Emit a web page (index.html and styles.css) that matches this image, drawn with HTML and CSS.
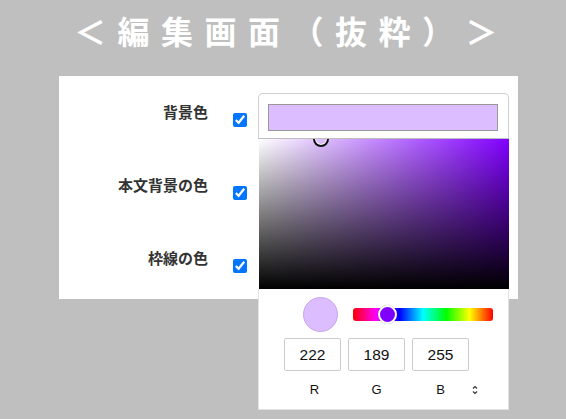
FILE: index.html
```html
<!DOCTYPE html>
<html lang="ja">
<head>
<meta charset="utf-8">
<title>編集画面（抜粋）</title>
<link rel="stylesheet" href="styles.css">
</head>
<body>
<div class="stage">
  <h1 class="title">＜編集画面（抜粋）＞</h1>
  <div class="panel">
    <div class="row">
      <span class="label">背景色</span>
      <input class="check" type="checkbox" checked>
    </div>
    <div class="row">
      <span class="label">本文背景の色</span>
      <input class="check" type="checkbox" checked>
    </div>
    <div class="row">
      <span class="label">枠線の色</span>
      <input class="check" type="checkbox" checked>
    </div>
  </div>

  <div class="picker">
    <div class="picker-head">
      <div class="swatch-bar"></div>
    </div>
    <div class="sv-area">
      <div class="sv-white"></div>
      <div class="sv-black"></div>
      <div class="sv-cursor"></div>
    </div>
    <div class="picker-body">
      <div class="tools">
        <div class="preview"></div>
        <div class="hue">
          <div class="hue-thumb"></div>
        </div>
      </div>
      <div class="fields">
        <div class="field">222</div>
        <div class="field">189</div>
        <div class="field">255</div>
      </div>
      <div class="field-labels">
        <span class="flabel">R</span>
        <span class="flabel">G</span>
        <span class="flabel">B</span>
        <svg class="toggle" width="6" height="10" viewBox="0 0 6 10">
          <path d="M1 3.5 L3 1.5 L5 3.5 M1 6.5 L3 8.5 L5 6.5" fill="none" stroke="#333" stroke-width="1.2"/>
        </svg>
      </div>
    </div>
  </div>
</div>
</body>
</html>
```

FILE: styles.css
```css
html, body {
  margin: 0;
  padding: 0;
}
body {
  background: #bfbfbf;
  font-family: "Noto Sans CJK JP", "Noto Sans", sans-serif;
}
.stage {
  position: relative;
  width: 566px;
  height: 419px;
  overflow: hidden;
  background: #bfbfbf;
  border-top-left-radius: 4px;
}
.title {
  margin: 0;
  height: 76px;
  box-sizing: border-box;
  padding: 9px 0 0 74px;
  font-size: 32px;
  line-height: 42px;
  font-weight: 700;
  letter-spacing: 11.5px;
  color: #ffffff;
  white-space: nowrap;
}
.panel {
  margin-left: 59px;
  width: 459px;
  height: 223px;
  background: #ffffff;
  box-sizing: border-box;
  padding-top: 26px;
}
.row {
  display: flex;
  align-items: flex-start;
  height: 73px;
}
.label {
  width: 149px;
  text-align: right;
  font-size: 15px;
  line-height: 20px;
  font-weight: 700;
  color: #333333;
}
.check {
  width: 14px;
  height: 14px;
  margin: 11px 0 0 25px;
}

/* color picker popover */
.picker {
  position: absolute;
  left: 258px;
  top: 93px;
  width: 251px;
  height: 317px;
  display: flex;
  flex-direction: column;
}
.picker-head {
  height: 46px;
  box-sizing: border-box;
  border: 1px solid #cfcfcf;
  border-bottom-color: #bdbdbd;
  border-radius: 5px 5px 0 0;
  background: #ffffff;
  padding: 10px 10px 0 9px;
  position: relative;
  z-index: 2;
}
.swatch-bar {
  height: 27px;
  box-sizing: border-box;
  border: 1px solid #999999;
  background: #dcbdff;
}
.sv-area {
  position: relative;
  height: 150px;
  margin-left: 1px;
  background: #8000ff;
}
.sv-white {
  position: absolute;
  inset: 0;
  background: linear-gradient(to right, #ffffff, rgba(255,255,255,0));
}
.sv-black {
  position: absolute;
  inset: 0;
  background: linear-gradient(to bottom, rgba(0,0,0,0), #000000);
}
.sv-cursor {
  position: absolute;
  left: 54px;
  top: -8px;
  width: 12px;
  height: 12px;
  border: 2px solid #111111;
  border-radius: 50%;
  box-shadow: inset 0 0 0 1px #ffffff;
  z-index: 1;
}
.picker-body {
  flex: 1;
  background: #ffffff;
  border: 1px solid #e2e2e2;
  border-top: none;
  box-sizing: border-box;
}
.tools {
  display: flex;
  align-items: center;
  gap: 15px;
  padding: 8px 0 0 44px;
}
.preview {
  width: 35px;
  height: 35px;
  box-sizing: border-box;
  border-radius: 50%;
  background: #dcbdff;
  border: 1px solid #c7a6ee;
}
.hue {
  position: relative;
  width: 140px;
  height: 13px;
  border-radius: 3px;
  background: linear-gradient(to right, #ff0000 0%, #ff00ff 16.6%, #0000ff 33.3%, #00ffff 50%, #00ff00 66.6%, #ffff00 83.3%, #ff0000 100%);
}
.hue-thumb {
  position: absolute;
  left: 25px;
  top: -3px;
  width: 15px;
  height: 15px;
  border: 2px solid #ffffff;
  border-radius: 50%;
  background: #8000ff;
  box-shadow: 0 0 1px rgba(0,0,0,0.4);
}
.fields {
  display: flex;
  gap: 7px;
  padding: 6px 0 0 25px;
}
.field {
  width: 57px;
  height: 33px;
  box-sizing: border-box;
  border: 1px solid #cccccc;
  border-radius: 2px;
  font-family: "Liberation Sans", Arial, sans-serif;
  font-size: 15.5px;
  line-height: 31px;
  text-align: center;
  color: #111111;
}
.field-labels {
  display: flex;
  align-items: center;
  gap: 7px;
  padding: 11px 0 0 25px;
}
.flabel {
  width: 57px;
  text-align: center;
  font-family: "Liberation Sans", Arial, sans-serif;
  font-size: 13px;
  line-height: 16px;
  color: #111111;
}
.flabel:first-child {
  padding-left: 4px;
  box-sizing: border-box;
}
.toggle {
  margin-left: -4px;
}
```
